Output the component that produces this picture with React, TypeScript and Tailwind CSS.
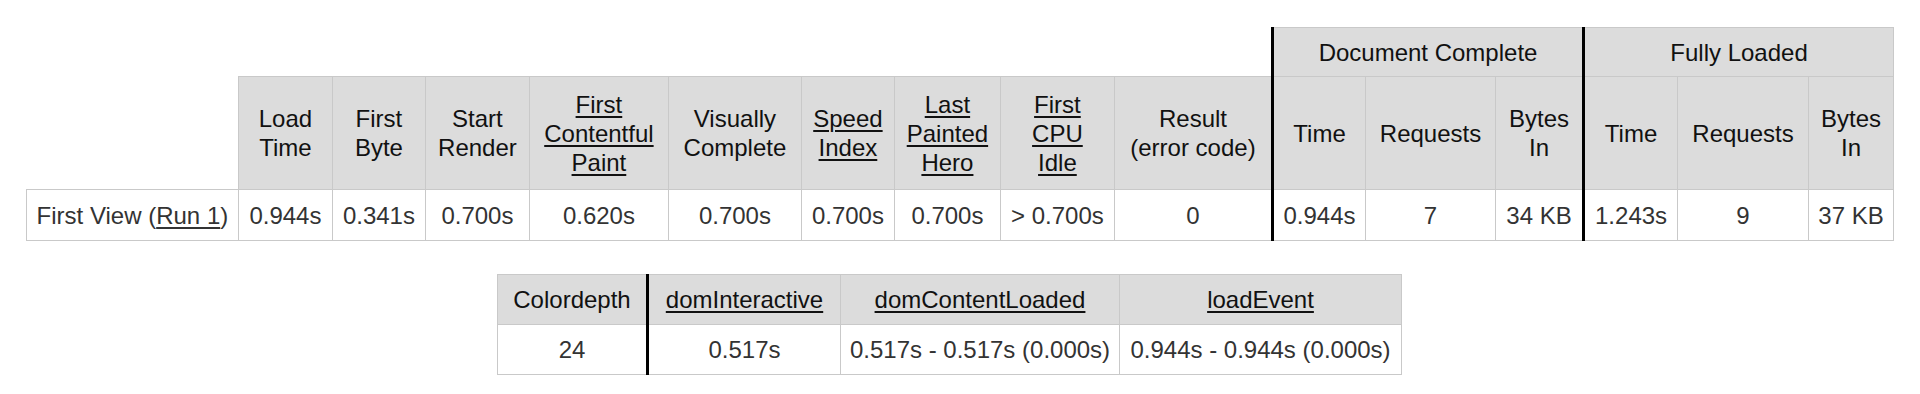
import React from "react";

type Head = { lines: string[]; link?: boolean; w: number; thick?: boolean };

const heads: Head[] = [
  { lines: ["Load", "Time"], w: 94 },
  { lines: ["First", "Byte"], w: 93 },
  { lines: ["Start", "Render"], w: 104 },
  { lines: ["First", "Contentful", "Paint"], link: true, w: 139 },
  { lines: ["Visually", "Complete"], w: 133 },
  { lines: ["Speed", "Index"], link: true, w: 93 },
  { lines: ["Last", "Painted", "Hero"], link: true, w: 106 },
  { lines: ["First", "CPU", "Idle"], link: true, w: 114 },
  { lines: ["Result", "(error code)"], w: 158 },
  { lines: ["Time"], w: 93, thick: true },
  { lines: ["Requests"], w: 130 },
  { lines: ["Bytes", "In"], w: 88 },
  { lines: ["Time"], w: 94, thick: true },
  { lines: ["Requests"], w: 131 },
  { lines: ["Bytes", "In"], w: 85 },
];

const values = [
  "0.944s",
  "0.341s",
  "0.700s",
  "0.620s",
  "0.700s",
  "0.700s",
  "0.700s",
  "> 0.700s",
  "0",
  "0.944s",
  "7",
  "34 KB",
  "1.243s",
  "9",
  "37 KB",
];

const link = "underline decoration-2 underline-offset-[3px]";
const th = "border border-[#c9c9c9] bg-[#dcdcdc] text-[#111] font-normal text-center align-middle px-1";
const td = "border border-[#c9c9c9] bg-white text-[#333] text-center align-middle px-1 whitespace-nowrap";
const thick = "border-l-[3px] border-l-black";

function ResultTable() {
  return (
    <table className="mx-auto border-collapse table-fixed w-[1868px]">
      <colgroup>
        <col className="w-[212px]" />
        {heads.map((h, i) => (
          <col key={i} style={{ width: h.w }} />
        ))}
      </colgroup>
      <thead>
        <tr className="h-[49px]">
          <th colSpan={10} className="border-0 bg-white"></th>
          <th colSpan={3} className={`${th} ${thick}`}>Document Complete</th>
          <th colSpan={3} className={`${th} ${thick}`}>Fully Loaded</th>
        </tr>
        <tr className="h-[113px]">
          <th className="border-0 bg-white"></th>
          {heads.map((h, i) => (
            <th key={i} className={`${th} ${h.thick ? thick : ""}`}>
              {h.lines.map((l, j) => (
                <div key={j} className={h.link ? link : ""}>
                  {l}
                </div>
              ))}
            </th>
          ))}
        </tr>
      </thead>
      <tbody>
        <tr className="h-[51px]">
          <td className={`${td} px-2`}>
            First View (<span className={link}>Run 1</span>)
          </td>
          {values.map((v, i) => (
            <td key={i} className={`${td} ${heads[i].thick ? thick : ""}`}>
              {v}
            </td>
          ))}
        </tr>
      </tbody>
    </table>
  );
}

function TimingTable() {
  return (
    <table className="ml-[497px] mt-[33px] border-collapse table-fixed w-[904px]">
      <colgroup>
        <col className="w-[150px]" />
        <col className="w-[193px]" />
        <col className="w-[279px]" />
        <col className="w-[282px]" />
      </colgroup>
      <thead>
        <tr className="h-[50px]">
          <th className={th}>Colordepth</th>
          <th className={`${th} ${thick}`}>
            <span className={link}>domInteractive</span>
          </th>
          <th className={th}>
            <span className={link}>domContentLoaded</span>
          </th>
          <th className={th}>
            <span className={link}>loadEvent</span>
          </th>
        </tr>
      </thead>
      <tbody>
        <tr className="h-[50px]">
          <td className={td}>24</td>
          <td className={`${td} ${thick}`}>0.517s</td>
          <td className={td}>0.517s - 0.517s (0.000s)</td>
          <td className={td}>0.944s - 0.944s (0.000s)</td>
        </tr>
      </tbody>
    </table>
  );
}

export default function App() {
  return (
    <div className="w-[1920px] h-[394px] bg-white pt-[27px] font-['Liberation_Sans',Arial,sans-serif] text-[24px] leading-[29px]">
      <ResultTable />
      <TimingTable />
    </div>
  );
}
